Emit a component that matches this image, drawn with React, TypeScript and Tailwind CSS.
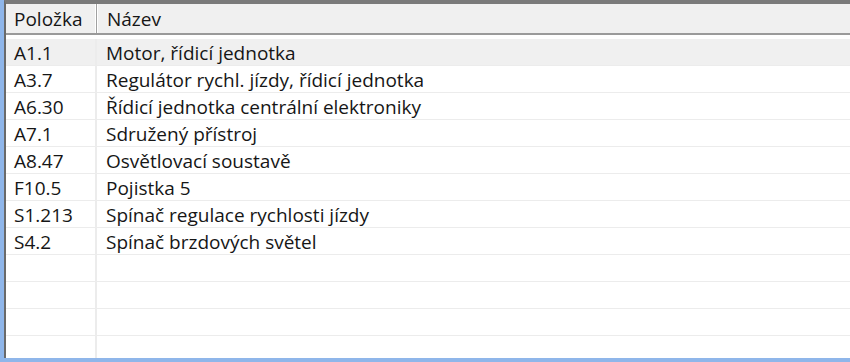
import React from 'react';

type Item = { code: string; name: string };

const items: Item[] = [
  { code: 'A1.1', name: 'Motor, řídicí jednotka' },
  { code: 'A3.7', name: 'Regulátor rychl. jízdy, řídicí jednotka' },
  { code: 'A6.30', name: 'Řídicí jednotka centrální elektroniky' },
  { code: 'A7.1', name: 'Sdružený přístroj' },
  { code: 'A8.47', name: 'Osvětlovací soustavě' },
  { code: 'F10.5', name: 'Pojistka 5' },
  { code: 'S1.213', name: 'Spínač regulace rychlosti jízdy' },
  { code: 'S4.2', name: 'Spínač brzdových světel' },
];

const EMPTY_ROWS = 5;

const App: React.FC = () => {
  const rows: (Item | null)[] = [...items, ...Array(EMPTY_ROWS).fill(null)];

  return (
    <div
      className="w-[850px] h-[362px] overflow-hidden bg-[#8fb6ea] pl-[4px] pb-[4px] flex"
      style={{ fontFamily: '"Open Sans", "Noto Sans", sans-serif' }}
    >
      <div className="flex-1 flex flex-col bg-white border-l-2 border-t-[4px] border-l-[#6a6a6a] border-t-[#7a7a7a] overflow-hidden">
        {/* column headers */}
        <div className="flex h-[31px] shrink-0 bg-[#f0f0f0] border-b-2 border-[#9a9a9a] text-[19px] text-[#161616]">
          <div className="w-[91px] pl-[8px] pt-[1px] flex items-center border-r border-[#a0a0a0] shadow-[inset_-1px_0_0_#ffffff]">
            Položka
          </div>
          <div className="flex-1 pl-[9px] pt-[1px] flex items-center border-l border-white">Název</div>
        </div>

        {/* item rows */}
        <div className="flex flex-col pt-[4px]">
          {rows.map((row, i) => (
            <div
              key={i}
              className={`flex h-[27px] shrink-0 text-[19px] leading-none text-[#161616] border-b border-[#ececec] ${
                i === 0 ? 'bg-[#f0f0f0]' : 'bg-white'
              }`}
            >
              <div className="w-[91px] pl-[8px] pt-[2px] flex items-center border-r-2 border-[#ececec]">
                {row?.code}
              </div>
              <div className="flex-1 pl-[9px] pt-[2px] flex items-center">{row?.name}</div>
            </div>
          ))}
        </div>
      </div>
    </div>
  );
};

export default App;
